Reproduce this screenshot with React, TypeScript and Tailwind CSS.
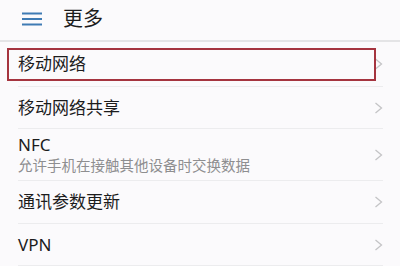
import React from 'react';

type Item = {
  title: string;
  subtitle?: string;
  height: string;
  highlighted?: boolean;
};

const items: Item[] = [
  { title: '移动网络', height: 'h-[45px]', highlighted: true },
  { title: '移动网络共享', height: 'h-[42px]' },
  { title: 'NFC', subtitle: '允许手机在接触其他设备时交换数据', height: 'h-[52px]' },
  { title: '通讯参数更新', height: 'h-[43px]' },
  { title: 'VPN', height: 'h-[42px]' },
];

const Chevron: React.FC = () => (
  <svg width="9" height="12" viewBox="0 0 9 12" fill="none" className="shrink-0">
    <polyline points="1.5,1 7.5,6 1.5,11" stroke="#c4c4c6" strokeWidth="1.3" />
  </svg>
);

const Row: React.FC<{ item: Item }> = ({ item }) => (
  <div
    className={`relative flex items-center justify-between border-b border-[#ececee] ${item.height}`}
  >
    {item.highlighted && (
      <div className="absolute left-[-11px] top-[6px] w-[369px] h-[33px] border-2 border-[#a5343f]" />
    )}
    <div className="flex flex-col">
      <span className="text-[17px] leading-[20px] text-[#1c1c1c]">{item.title}</span>
      {item.subtitle && (
        <span className="mt-[1px] text-[14.5px] leading-[18px] text-[#8e8e90]">{item.subtitle}</span>
      )}
    </div>
    <Chevron />
  </div>
);

export default function App() {
  return (
    <div
      className="w-[400px] h-[266px] overflow-hidden bg-[#fbfafc]"
      style={{ fontFamily: '"Noto Sans", "Noto Sans CJK SC", sans-serif' }}
    >
      <div className="flex items-center h-[42px] border-b-2 border-[#e4e4e6]">
        <svg width="20" height="14" viewBox="0 0 20 14" className="ml-[22px] mt-[-2px]">
          <line x1="0" y1="1.5" x2="20" y2="1.5" stroke="#3f7bb4" strokeWidth="2" />
          <line x1="0" y1="7" x2="20" y2="7" stroke="#3f7bb4" strokeWidth="2" />
          <line x1="0" y1="12.5" x2="20" y2="12.5" stroke="#3f7bb4" strokeWidth="2" />
        </svg>
        <span className="ml-[21px] mt-[-2px] text-[20px] leading-[24px] text-[#1c1c1c]">更多</span>
      </div>
      <div className="ml-[18px] mr-[17px]">
        {items.map((item) => (
          <Row key={item.title} item={item} />
        ))}
      </div>
    </div>
  );
}
